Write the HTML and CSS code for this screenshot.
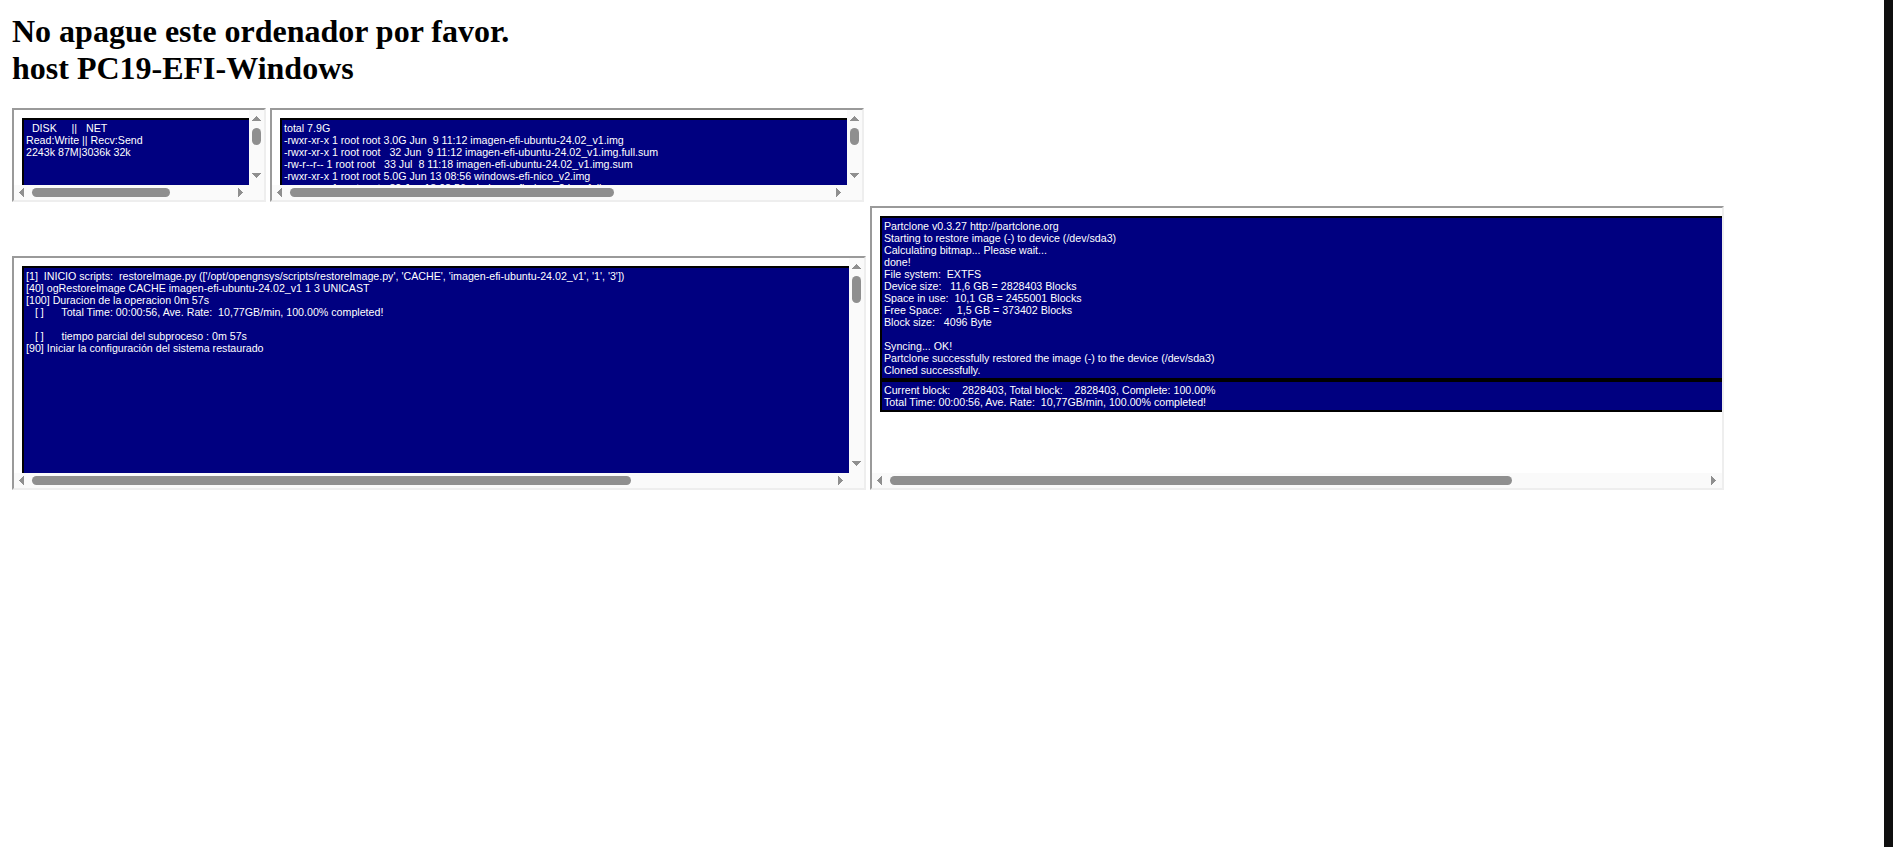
FILE: index.html
```html
<!DOCTYPE html>
<html lang="es">
<head>
<meta charset="utf-8">
<title>No apague este ordenador por favor.</title>
<link rel="stylesheet" href="styles.css">
</head>
<body>
<div class="page">
<main class="main">
<h1 class="title">No apague este ordenador por favor.<br>host PC19-EFI-Windows</h1>
<div class="row row-top">
<section class="panel panel-disk">
<div class="view"><pre class="log log-disk">  DISK     ||   NET
Read:Write || Recv:Send
2243k 87M|3036k 32k</pre></div>
<div class="vbar" aria-hidden="true">
<svg class="arrow" viewBox="0 0 15 15"><polygon points="3,11 7.5,6 12,11"/></svg>
<div class="track-v"><div class="thumb-v thumb-v-small"></div></div>
<svg class="arrow" viewBox="0 0 15 15"><polygon points="3,3 12,3 7.5,8"/></svg>
</div>
<div class="hbar" aria-hidden="true">
<svg class="arrow" viewBox="0 0 15 15"><polygon points="10,3 10,12 5,7.5"/></svg>
<div class="track-h"><div class="thumb-h thumb-h-disk"></div></div>
<svg class="arrow" viewBox="0 0 15 15"><polygon points="4,3 4,12 9,7.5"/></svg>
</div>
<div class="corner"></div>
</section>
<section class="panel panel-files">
<div class="view"><pre class="log log-files">total 7.9G
-rwxr-xr-x 1 root root 3.0G Jun  9 11:12 imagen-efi-ubuntu-24.02_v1.img
-rwxr-xr-x 1 root root   32 Jun  9 11:12 imagen-efi-ubuntu-24.02_v1.img.full.sum
-rw-r--r-- 1 root root   33 Jul  8 11:18 imagen-efi-ubuntu-24.02_v1.img.sum
-rwxr-xr-x 1 root root 5.0G Jun 13 08:56 windows-efi-nico_v2.img
-rwxr-xr-x 1 root root   32 Jun 13 08:56 windows-efi-nico_v2.img.full.sum</pre></div>
<div class="vbar" aria-hidden="true">
<svg class="arrow" viewBox="0 0 15 15"><polygon points="3,11 7.5,6 12,11"/></svg>
<div class="track-v"><div class="thumb-v thumb-v-small"></div></div>
<svg class="arrow" viewBox="0 0 15 15"><polygon points="3,3 12,3 7.5,8"/></svg>
</div>
<div class="hbar" aria-hidden="true">
<svg class="arrow" viewBox="0 0 15 15"><polygon points="10,3 10,12 5,7.5"/></svg>
<div class="track-h"><div class="thumb-h thumb-h-files"></div></div>
<svg class="arrow" viewBox="0 0 15 15"><polygon points="4,3 4,12 9,7.5"/></svg>
</div>
<div class="corner"></div>
</section>
</div>
<div class="row row-bottom">
<section class="panel panel-session">
<div class="view"><pre class="log log-session">[1]  INICIO scripts:  restoreImage.py (['/opt/opengnsys/scripts/restoreImage.py', 'CACHE', 'imagen-efi-ubuntu-24.02_v1', '1', '3'])
[40] ogRestoreImage CACHE imagen-efi-ubuntu-24.02_v1 1 3 UNICAST
[100] Duracion de la operacion 0m 57s
   [ ]      Total Time: 00:00:56, Ave. Rate:  10,77GB/min, 100.00% completed!

   [ ]      tiempo parcial del subproceso : 0m 57s
[90] Iniciar la configuración del sistema restaurado</pre></div>
<div class="vbar" aria-hidden="true">
<svg class="arrow" viewBox="0 0 15 15"><polygon points="3,11 7.5,6 12,11"/></svg>
<div class="track-v"><div class="thumb-v thumb-v-session"></div></div>
<svg class="arrow" viewBox="0 0 15 15"><polygon points="3,3 12,3 7.5,8"/></svg>
</div>
<div class="hbar" aria-hidden="true">
<svg class="arrow" viewBox="0 0 15 15"><polygon points="10,3 10,12 5,7.5"/></svg>
<div class="track-h"><div class="thumb-h thumb-h-session"></div></div>
<svg class="arrow" viewBox="0 0 15 15"><polygon points="4,3 4,12 9,7.5"/></svg>
</div>
<div class="corner"></div>
</section>
<section class="panel panel-clone">
<div class="view"><pre class="log log-clone">Partclone v0.3.27 http://partclone.org
Starting to restore image (-) to device (/dev/sda3)
Calculating bitmap... Please wait...
done!
File system:  EXTFS
Device size:   11,6 GB = 2828403 Blocks
Space in use:  10,1 GB = 2455001 Blocks
Free Space:     1,5 GB = 373402 Blocks
Block size:   4096 Byte

Syncing... OK!
Partclone successfully restored the image (-) to the device (/dev/sda3)
Cloned successfully.</pre><pre class="log log-clone">Current block:    2828403, Total block:    2828403, Complete: 100.00%
Total Time: 00:00:56, Ave. Rate:  10,77GB/min, 100.00% completed!</pre></div>
<div class="hbar" aria-hidden="true">
<svg class="arrow" viewBox="0 0 15 15"><polygon points="10,3 10,12 5,7.5"/></svg>
<div class="track-h"><div class="thumb-h thumb-h-clone"></div></div>
<svg class="arrow" viewBox="0 0 15 15"><polygon points="4,3 4,12 9,7.5"/></svg>
</div>
</section>
</div>
</main>
<aside class="edge"></aside>
</div>
</body>
</html>
```
FILE: styles.css
```css
html, body {
  margin: 0;
  padding: 0;
  background: #fff;
}

.page {
  display: flex;
  height: 847px;
  overflow: hidden;
}

.main {
  flex: 1;
  padding: 12px;
  min-width: 0;
}

.edge {
  width: 9px;
  background: #0f0f0f;
}

.title {
  margin: 0 0 21px;
  padding-top: 1px;
  font-family: "Liberation Serif", serif;
  font-size: 32px;
  line-height: 37px;
  font-weight: bold;
  color: #000;
}

.row {
  display: flex;
  align-items: flex-end;
  gap: 4px;
}

.row-top {
  margin-bottom: 4px;
}

.panel {
  box-sizing: border-box;
  flex: none;
  display: grid;
  grid-template-columns: minmax(0, 1fr) 15px;
  grid-template-rows: minmax(0, 1fr) 15px;
  background: #fff;
  border-style: solid;
  border-width: 2px;
  border-color: #9a9a9a #eeeeee #eeeeee #9a9a9a;
}

.panel-disk { width: 254px; height: 94px; }
.panel-files { width: 594px; height: 94px; }
.panel-session { width: 854px; height: 234px; }
.panel-clone { width: 854px; height: 284px; grid-template-columns: minmax(0, 1fr); }

.view {
  overflow: hidden;
  padding: 8px;
}

.log {
  box-sizing: border-box;
  margin: 0;
  padding: 2px;
  border: 2px solid #000;
  background: #000080;
  color: #fff;
  font-family: "Liberation Sans", Arial, sans-serif;
  font-size: 10.67px;
  line-height: 12px;
  white-space: pre;
}

.log-disk { width: 341px; height: 190px; }
.log-files { width: 955px; height: 190px; }
.log-session { width: 1112px; height: 1522px; }
.log-clone { width: 1107px; }

.vbar,
.hbar,
.corner {
  background: #fafafa;
}

.vbar {
  display: flex;
  flex-direction: column;
}

.hbar {
  display: flex;
}

.arrow {
  flex: none;
  display: block;
  width: 15px;
  height: 15px;
  fill: #8f8f8f;
  shape-rendering: crispEdges;
}

.track-v {
  flex: 1;
  padding: 3px 3px 0;
}

.track-h {
  flex: 1;
  padding: 3px 0 0 3px;
}

.thumb-v,
.thumb-h {
  background: #8f8f8f;
  border-radius: 5px;
}

.thumb-v { width: 9px; }
.thumb-h { height: 9px; }

.thumb-v-small { height: 17px; }
.thumb-v-session { height: 27px; }
.thumb-h-disk { width: 138px; }
.thumb-h-files { width: 324px; }
.thumb-h-session { width: 599px; }
.thumb-h-clone { width: 622px; }
```
